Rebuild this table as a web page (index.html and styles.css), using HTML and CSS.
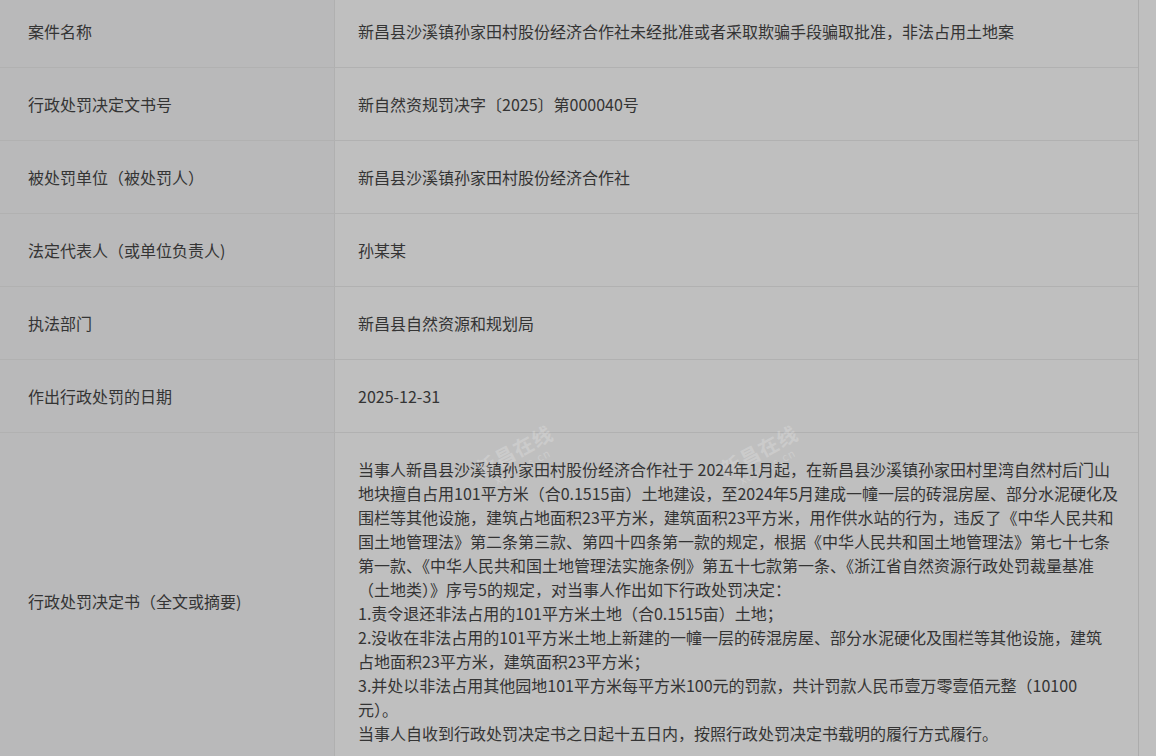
FILE: index.html
```html
<!DOCTYPE html>
<html lang="zh-CN">
<head>
<meta charset="utf-8">
<title>行政处罚决定</title>
<link rel="stylesheet" href="styles.css">
</head>
<body>
<div class="page">
  <div class="table">
    <div class="row">
      <div class="label">案件名称</div>
      <div class="value">新昌县沙溪镇孙家田村股份经济合作社未经批准或者采取欺骗手段骗取批准，非法占用土地案</div>
    </div>
    <div class="row">
      <div class="label">行政处罚决定文书号</div>
      <div class="value">新自然资规罚决字〔2025〕第000040号</div>
    </div>
    <div class="row">
      <div class="label">被处罚单位（被处罚人）</div>
      <div class="value">新昌县沙溪镇孙家田村股份经济合作社</div>
    </div>
    <div class="row">
      <div class="label">法定代表人（或单位负责人)</div>
      <div class="value">孙某某</div>
    </div>
    <div class="row">
      <div class="label">执法部门</div>
      <div class="value">新昌县自然资源和规划局</div>
    </div>
    <div class="row">
      <div class="label">作出行政处罚的日期</div>
      <div class="value">2025-12-31</div>
    </div>
    <div class="row">
      <div class="label">行政处罚决定书（全文或摘要)</div>
      <div class="value long">
        <span class="wm wm1">新昌在线<small>xcnews.cn</small></span>
        <span class="wm wm2">新昌在线<small>xcnews.cn</small></span>
        <span class="line">当事人新昌县沙溪镇孙家田村股份经济合作社于 2024年1月起，在新昌县沙溪镇孙家田村里湾自然村后门山</span>
        <span class="line">地块擅自占用101平方米（合0.1515亩）土地建设，至2024年5月建成一幢一层的砖混房屋、部分水泥硬化及</span>
        <span class="line">围栏等其他设施，建筑占地面积23平方米，建筑面积23平方米，用作供水站的行为，违反了《中华人民共和</span>
        <span class="line">国土地管理法》第二条第三款、第四十四条第一款的规定，根据《中华人民共和国土地管理法》第七十七条</span>
        <span class="line">第一款、《中华人民共和国土地管理法实施条例》第五十七款第一条、《浙江省自然资源行政处罚裁量基准</span>
        <span class="line">（土地类）》序号5的规定，对当事人作出如下行政处罚决定：</span>
        <span class="line">1.责令退还非法占用的101平方米土地（合0.1515亩）土地；</span>
        <span class="line">2.没收在非法占用的101平方米土地上新建的一幢一层的砖混房屋、部分水泥硬化及围栏等其他设施，建筑</span>
        <span class="line">占地面积23平方米，建筑面积23平方米；</span>
        <span class="line">3.并处以非法占用其他园地101平方米每平方米100元的罚款，共计罚款人民币壹万零壹佰元整（10100</span>
        <span class="line">元）。</span>
        <span class="line">当事人自收到行政处罚决定书之日起十五日内，按照行政处罚决定书载明的履行方式履行。</span>
      </div>
    </div>
  </div>
</div>
</body>
</html>
```

FILE: styles.css
```css
html, body {
  margin: 0;
  padding: 0;
  overflow: hidden;
  background: #bfbfbf;
}
body {
  font-family: "Microsoft YaHei", "Noto Sans CJK SC", "Noto Sans", sans-serif;
  font-size: 16px;
  line-height: 24px;
  color: #343434;
}
.page {
  width: 1156px;
}
.table {
  width: 1139px;
  margin-top: -6px;
  border-right: 1px solid #acacac;
  box-sizing: border-box;
}
.row {
  display: grid;
  grid-template-columns: 335px minmax(0, 1fr);
  border-top: 1px solid #b1b1b1;
}
.label {
  background: #b9b9ba;
  border-right: 1px solid #b0b0b0;
  padding: 24px 20px 24px 28px;
  display: flex;
  align-items: center;
}
.value {
  background: #bfbfbf;
  padding: 24px 22px 24px 23px;
  min-width: 0;
}
.value.long {
  position: relative;
}
.line {
  display: block;
  white-space: nowrap;
}
.wm {
  position: absolute;
  top: 6px;
  color: rgba(255, 255, 255, 0.2);
  font-size: 20px;
  font-weight: bold;
  line-height: 22px;
  letter-spacing: 1px;
  transform: rotate(-28deg);
  display: flex;
  flex-direction: column;
  align-items: center;
  pointer-events: none;
}
.wm small {
  font-size: 11px;
  line-height: 12px;
  font-weight: normal;
}
.wm1 { left: 140px; }
.wm2 { left: 385px; }
```
